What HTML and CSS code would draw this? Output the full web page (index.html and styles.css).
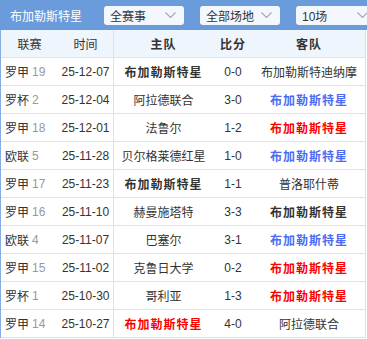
FILE: index.html
```html
<!DOCTYPE html>
<html>
<head>
<meta charset="utf-8">
<link rel="stylesheet" href="styles.css">
</head>
<body>
<div class="panel">
  <div class="topbar">
    <div class="title">布加勒斯特星</div>
    <div class="selects">
      <div class="sel"><span>全赛事</span><svg class="chev" width="11" height="6" viewBox="0 0 11 6"><polyline points="0.5,0.5 5.5,5.5 10.5,0.5" fill="none" stroke="#aaa" stroke-width="1.2"/></svg></div>
      <div class="sel"><span>全部场地</span><svg class="chev" width="11" height="6" viewBox="0 0 11 6"><polyline points="0.5,0.5 5.5,5.5 10.5,0.5" fill="none" stroke="#aaa" stroke-width="1.2"/></svg></div>
      <div class="sel"><span>10场</span><svg class="chev" width="11" height="6" viewBox="0 0 11 6"><polyline points="0.5,0.5 5.5,5.5 10.5,0.5" fill="none" stroke="#aaa" stroke-width="1.2"/></svg></div>
    </div>
  </div>
  <div class="table">
    <div class="row head">
      <div class="c lg">联赛</div>
      <div class="c tm">时间</div>
      <div class="c hm b">主队</div>
      <div class="c sc b">比分</div>
      <div class="c aw b">客队</div>
    </div>
    <div class="row">
      <div class="c lg">罗甲<span class="rd">19</span></div>
      <div class="c tm">25-12-07</div>
      <div class="c hm b">布加勒斯特星</div>
      <div class="c sc">0-0</div>
      <div class="c aw">布加勒斯特迪纳摩</div>
    </div>
    <div class="row">
      <div class="c lg">罗杯<span class="rd">2</span></div>
      <div class="c tm">25-12-04</div>
      <div class="c hm">阿拉德联合</div>
      <div class="c sc">3-0</div>
      <div class="c aw b blue">布加勒斯特星</div>
    </div>
    <div class="row">
      <div class="c lg">罗甲<span class="rd">18</span></div>
      <div class="c tm">25-12-01</div>
      <div class="c hm">法鲁尔</div>
      <div class="c sc">1-2</div>
      <div class="c aw b red">布加勒斯特星</div>
    </div>
    <div class="row">
      <div class="c lg">欧联<span class="rd">5</span></div>
      <div class="c tm">25-11-28</div>
      <div class="c hm">贝尔格莱德红星</div>
      <div class="c sc">1-0</div>
      <div class="c aw b blue">布加勒斯特星</div>
    </div>
    <div class="row">
      <div class="c lg">罗甲<span class="rd">17</span></div>
      <div class="c tm">25-11-23</div>
      <div class="c hm b">布加勒斯特星</div>
      <div class="c sc">1-1</div>
      <div class="c aw">普洛耶什蒂</div>
    </div>
    <div class="row">
      <div class="c lg">罗甲<span class="rd">16</span></div>
      <div class="c tm">25-11-10</div>
      <div class="c hm">赫曼施塔特</div>
      <div class="c sc">3-3</div>
      <div class="c aw b">布加勒斯特星</div>
    </div>
    <div class="row">
      <div class="c lg">欧联<span class="rd">4</span></div>
      <div class="c tm">25-11-07</div>
      <div class="c hm">巴塞尔</div>
      <div class="c sc">3-1</div>
      <div class="c aw b blue">布加勒斯特星</div>
    </div>
    <div class="row">
      <div class="c lg">罗甲<span class="rd">15</span></div>
      <div class="c tm">25-11-02</div>
      <div class="c hm">克鲁日大学</div>
      <div class="c sc">0-2</div>
      <div class="c aw b red">布加勒斯特星</div>
    </div>
    <div class="row">
      <div class="c lg">罗杯<span class="rd">1</span></div>
      <div class="c tm">25-10-30</div>
      <div class="c hm">哥利亚</div>
      <div class="c sc">1-3</div>
      <div class="c aw b red">布加勒斯特星</div>
    </div>
    <div class="row">
      <div class="c lg">罗甲<span class="rd">14</span></div>
      <div class="c tm">25-10-27</div>
      <div class="c hm b red">布加勒斯特星</div>
      <div class="c sc">4-0</div>
      <div class="c aw">阿拉德联合</div>
    </div>
  </div>
</div>
</body>
</html>
```
FILE: styles.css
```css
html, body {
  margin: 0;
  padding: 0;
  background: #fff;
}
body {
  font-family: "Liberation Sans", "Noto Sans CJK SC", sans-serif;
  font-size: 12px;
  color: #333;
  overflow: hidden;
}
.panel {
  width: 367px;
}
.topbar {
  height: 30px;
  background: #6a9bdb;
  display: flex;
  align-items: center;
  overflow: hidden;
}
.title {
  color: #fff;
  font-size: 12px;
  width: 94px;
  padding-left: 10px;
  flex: none;
}
.selects {
  display: flex;
  gap: 16px;
  flex: none;
}
.sel {
  width: 80px;
  height: 19px;
  box-sizing: border-box;
  background: #f4f8fe;
  border-radius: 3px;
  display: flex;
  align-items: center;
  justify-content: space-between;
  padding: 0 8px 0 6px;
  color: #333;
  flex: none;
}
.chev {
  display: block;
}
.table {
  width: 366px;
  border-left: 1px solid #86ade3;
  border-right: 1px solid #d3e2f4;
  box-sizing: border-box;
}
.row {
  display: grid;
  grid-template-columns: 57px 56px 99px 40px 1fr;
  height: 28px;
  border-bottom: 1px solid #d6e4f5;
  box-sizing: border-box;
}
.row.head {
  background: #eef5fd;
}
.c {
  display: flex;
  align-items: center;
  justify-content: center;
  white-space: nowrap;
}
.lg {
  justify-content: flex-start;
  padding-left: 4px;
}
.tm {
  border-right: 1px solid #d6e4f5;
}
.head .lg {
  justify-content: center;
  padding-left: 0;
}
.rd {
  color: #999;
  margin-left: 3px;
}
.b {
  font-weight: bold;
  letter-spacing: 1px;
}
.blue {
  color: #4a6cf5;
}
.red {
  color: #ff0000;
}
```
